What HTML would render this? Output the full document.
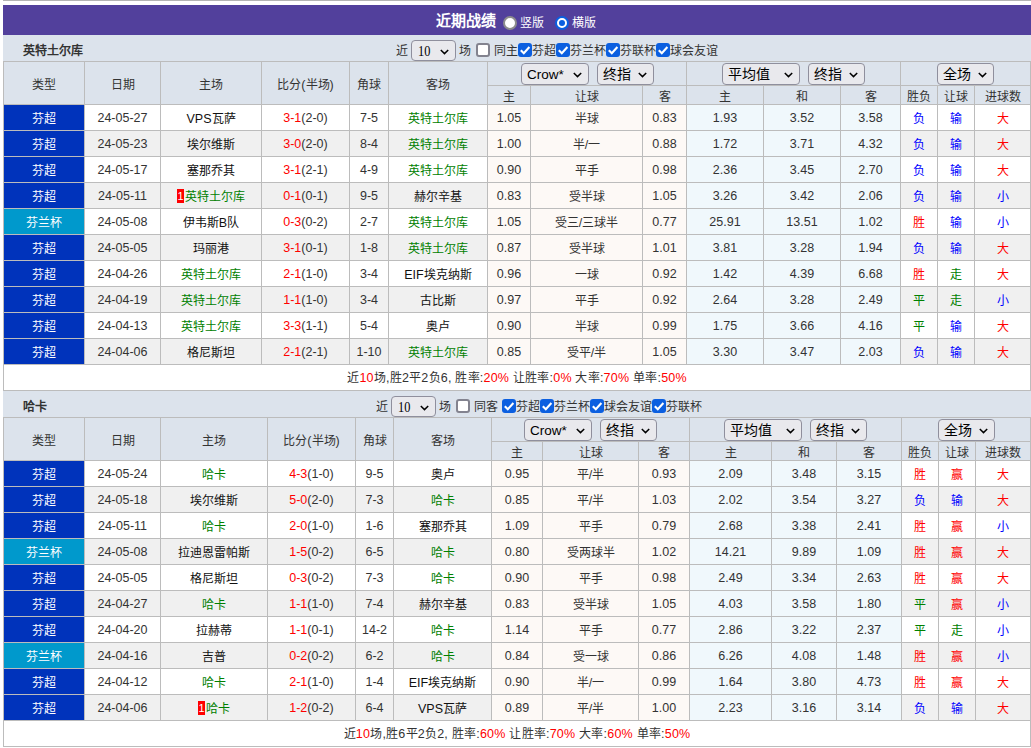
<!DOCTYPE html><html lang="zh-CN"><head><meta charset="utf-8"><style>
*{margin:0;padding:0;box-sizing:border-box}
html,body{width:1031px;height:748px;overflow:hidden;background:#fff}
body{position:relative;font-family:"Liberation Sans",sans-serif;font-size:12.5px;color:#333}
.a{position:absolute}
.ln{position:absolute;background:#bcbcbc}
.c{position:absolute;display:flex;align-items:center;justify-content:center;white-space:nowrap}
.t{position:absolute;white-space:nowrap}
.hd{background:#dce3ec}
.k{font-size:12px}
.fc{background:#0033bb;color:#fff}
.fb{background:#0099cc;color:#fff}
.ah{background:#fdf9f6}
.ox{background:#f0f8fc}
.alt{background:#f0f0f0}
.g{color:#008000}.r{color:#f00}.b{color:#00f}
.tm{color:#111;font-weight:500}
.g{font-weight:500}
.sel{position:absolute;border:1px solid #8f8f9d;border-radius:4px;background:#e9e9ed;color:#000;font-size:13.5px}
.sel .k{font-size:14px}
.sel>span{position:absolute;left:5px;top:0;line-height:21px;white-space:nowrap}
.sel svg{position:absolute;right:6px;top:8px}
.cb{position:absolute;width:14px;height:14px;border-radius:3px}
.cb.on{background:#0b5fe0}
.cb.off{border:2px solid #83838f;background:#fff}
.badge{display:inline-block;background:#f00;color:#fff;font-size:11px;line-height:14px;width:7px;text-align:center;margin-right:1px;position:relative;top:-1px}
</style></head><body><div class="a" style="left:3px;top:0;width:1028px;height:1px;background:#b4b4b4"></div>
<div class="a" style="left:3px;top:5px;width:1028px;height:30px;background:#52409c"></div>
<div class="t" style="left:436px;top:6px;line-height:30px;font-weight:bold;color:#fff"><span style="font-size:15px">近期战绩</span></div>
<div class="a" style="left:503px;top:16px;width:14px;height:14px;border-radius:50%;background:#fff;border:2px solid #8c8c8c"></div>
<div class="t" style="left:520px;top:8px;line-height:30px;color:#fff"><span class="k">竖版</span></div>
<div class="a" style="left:555px;top:16px;width:14px;height:14px;border-radius:50%;background:#fff;border:2px solid #0b5fe0"><div style="position:absolute;left:2px;top:2px;width:6px;height:6px;border-radius:50%;background:#0b5fe0"></div></div>
<div class="t" style="left:572px;top:8px;line-height:30px;color:#fff"><span class="k">横版</span></div>
<div class="a hd" style="left:3px;top:35px;width:1028px;height:26px;"></div>
<div class="t" style="left:23px;top:38px;line-height:26px;font-weight:bold;color:#333"><span class="k">英特土尔库</span></div>
<div class="t" style="left:396px;top:42px;line-height:18px;color:#333"><span class="k">近</span></div>
<div class="sel" style="left:411px;top:40px;width:45px;height:21px;font-family:'Liberation Serif',serif;font-size:14.5px"><span style="left:6px;line-height:20px;transform:scaleX(0.85);transform-origin:0 0">10</span><svg width="9" height="6" viewBox="0 0 9 6"><path d="M0.8 1l3.7 3.6 3.7-3.6" fill="none" stroke="#000" stroke-width="1.5"/></svg></div>
<div class="t" style="left:459px;top:42px;line-height:18px;color:#333"><span class="k">场</span></div>
<div class="cb off" style="left:476px;top:43px"></div>
<div class="t" style="left:494px;top:42px;line-height:18px;color:#333"><span class="k">同主</span></div>
<div class="cb on" style="left:518px;top:43px"><svg width="14" height="14" viewBox="0 0 14 14" style="position:absolute;left:0;top:0"><path d="M2.8 7.2l3 3 5.6-6.2" fill="none" stroke="#fff" stroke-width="2.1"/></svg></div>
<div class="t" style="left:532px;top:42px;line-height:18px;color:#333"><span class="k">芬超</span></div>
<div class="cb on" style="left:556px;top:43px"><svg width="14" height="14" viewBox="0 0 14 14" style="position:absolute;left:0;top:0"><path d="M2.8 7.2l3 3 5.6-6.2" fill="none" stroke="#fff" stroke-width="2.1"/></svg></div>
<div class="t" style="left:570px;top:42px;line-height:18px;color:#333"><span class="k">芬兰杯</span></div>
<div class="cb on" style="left:606px;top:43px"><svg width="14" height="14" viewBox="0 0 14 14" style="position:absolute;left:0;top:0"><path d="M2.8 7.2l3 3 5.6-6.2" fill="none" stroke="#fff" stroke-width="2.1"/></svg></div>
<div class="t" style="left:620px;top:42px;line-height:18px;color:#333"><span class="k">芬联杯</span></div>
<div class="cb on" style="left:656px;top:43px"><svg width="14" height="14" viewBox="0 0 14 14" style="position:absolute;left:0;top:0"><path d="M2.8 7.2l3 3 5.6-6.2" fill="none" stroke="#fff" stroke-width="2.1"/></svg></div>
<div class="t" style="left:670px;top:42px;line-height:18px;color:#333"><span class="k">球会友谊</span></div>
<div class="a hd" style="left:3px;top:61px;width:1028px;height:43px;"></div>
<div class="a fc" style="left:4px;top:105px;width:80px;height:25px;"></div>
<div class="a" style="left:85px;top:105px;width:75px;height:25px;"></div>
<div class="a" style="left:161px;top:105px;width:100px;height:25px;"></div>
<div class="a" style="left:262px;top:105px;width:87px;height:25px;"></div>
<div class="a" style="left:350px;top:105px;width:38px;height:25px;"></div>
<div class="a" style="left:389px;top:105px;width:98px;height:25px;"></div>
<div class="a ah" style="left:488px;top:105px;width:42px;height:25px;"></div>
<div class="a ah" style="left:531px;top:105px;width:111px;height:25px;"></div>
<div class="a ah" style="left:643px;top:105px;width:43px;height:25px;"></div>
<div class="a ox" style="left:687px;top:105px;width:76px;height:25px;"></div>
<div class="a ox" style="left:764px;top:105px;width:76px;height:25px;"></div>
<div class="a ox" style="left:841px;top:105px;width:59px;height:25px;"></div>
<div class="a" style="left:901px;top:105px;width:36px;height:25px;"></div>
<div class="a" style="left:938px;top:105px;width:36px;height:25px;"></div>
<div class="a" style="left:975px;top:105px;width:55px;height:25px;"></div>
<div class="a fc" style="left:4px;top:131px;width:80px;height:25px;"></div>
<div class="a alt" style="left:85px;top:131px;width:75px;height:25px;"></div>
<div class="a alt" style="left:161px;top:131px;width:100px;height:25px;"></div>
<div class="a alt" style="left:262px;top:131px;width:87px;height:25px;"></div>
<div class="a alt" style="left:350px;top:131px;width:38px;height:25px;"></div>
<div class="a alt" style="left:389px;top:131px;width:98px;height:25px;"></div>
<div class="a ah" style="left:488px;top:131px;width:42px;height:25px;"></div>
<div class="a ah" style="left:531px;top:131px;width:111px;height:25px;"></div>
<div class="a ah" style="left:643px;top:131px;width:43px;height:25px;"></div>
<div class="a ox" style="left:687px;top:131px;width:76px;height:25px;"></div>
<div class="a ox" style="left:764px;top:131px;width:76px;height:25px;"></div>
<div class="a ox" style="left:841px;top:131px;width:59px;height:25px;"></div>
<div class="a alt" style="left:901px;top:131px;width:36px;height:25px;"></div>
<div class="a alt" style="left:938px;top:131px;width:36px;height:25px;"></div>
<div class="a alt" style="left:975px;top:131px;width:55px;height:25px;"></div>
<div class="a fc" style="left:4px;top:157px;width:80px;height:25px;"></div>
<div class="a" style="left:85px;top:157px;width:75px;height:25px;"></div>
<div class="a" style="left:161px;top:157px;width:100px;height:25px;"></div>
<div class="a" style="left:262px;top:157px;width:87px;height:25px;"></div>
<div class="a" style="left:350px;top:157px;width:38px;height:25px;"></div>
<div class="a" style="left:389px;top:157px;width:98px;height:25px;"></div>
<div class="a ah" style="left:488px;top:157px;width:42px;height:25px;"></div>
<div class="a ah" style="left:531px;top:157px;width:111px;height:25px;"></div>
<div class="a ah" style="left:643px;top:157px;width:43px;height:25px;"></div>
<div class="a ox" style="left:687px;top:157px;width:76px;height:25px;"></div>
<div class="a ox" style="left:764px;top:157px;width:76px;height:25px;"></div>
<div class="a ox" style="left:841px;top:157px;width:59px;height:25px;"></div>
<div class="a" style="left:901px;top:157px;width:36px;height:25px;"></div>
<div class="a" style="left:938px;top:157px;width:36px;height:25px;"></div>
<div class="a" style="left:975px;top:157px;width:55px;height:25px;"></div>
<div class="a fc" style="left:4px;top:183px;width:80px;height:25px;"></div>
<div class="a alt" style="left:85px;top:183px;width:75px;height:25px;"></div>
<div class="a alt" style="left:161px;top:183px;width:100px;height:25px;"></div>
<div class="a alt" style="left:262px;top:183px;width:87px;height:25px;"></div>
<div class="a alt" style="left:350px;top:183px;width:38px;height:25px;"></div>
<div class="a alt" style="left:389px;top:183px;width:98px;height:25px;"></div>
<div class="a ah" style="left:488px;top:183px;width:42px;height:25px;"></div>
<div class="a ah" style="left:531px;top:183px;width:111px;height:25px;"></div>
<div class="a ah" style="left:643px;top:183px;width:43px;height:25px;"></div>
<div class="a ox" style="left:687px;top:183px;width:76px;height:25px;"></div>
<div class="a ox" style="left:764px;top:183px;width:76px;height:25px;"></div>
<div class="a ox" style="left:841px;top:183px;width:59px;height:25px;"></div>
<div class="a alt" style="left:901px;top:183px;width:36px;height:25px;"></div>
<div class="a alt" style="left:938px;top:183px;width:36px;height:25px;"></div>
<div class="a alt" style="left:975px;top:183px;width:55px;height:25px;"></div>
<div class="a fb" style="left:4px;top:209px;width:80px;height:25px;"></div>
<div class="a" style="left:85px;top:209px;width:75px;height:25px;"></div>
<div class="a" style="left:161px;top:209px;width:100px;height:25px;"></div>
<div class="a" style="left:262px;top:209px;width:87px;height:25px;"></div>
<div class="a" style="left:350px;top:209px;width:38px;height:25px;"></div>
<div class="a" style="left:389px;top:209px;width:98px;height:25px;"></div>
<div class="a ah" style="left:488px;top:209px;width:42px;height:25px;"></div>
<div class="a ah" style="left:531px;top:209px;width:111px;height:25px;"></div>
<div class="a ah" style="left:643px;top:209px;width:43px;height:25px;"></div>
<div class="a ox" style="left:687px;top:209px;width:76px;height:25px;"></div>
<div class="a ox" style="left:764px;top:209px;width:76px;height:25px;"></div>
<div class="a ox" style="left:841px;top:209px;width:59px;height:25px;"></div>
<div class="a" style="left:901px;top:209px;width:36px;height:25px;"></div>
<div class="a" style="left:938px;top:209px;width:36px;height:25px;"></div>
<div class="a" style="left:975px;top:209px;width:55px;height:25px;"></div>
<div class="a fc" style="left:4px;top:235px;width:80px;height:25px;"></div>
<div class="a alt" style="left:85px;top:235px;width:75px;height:25px;"></div>
<div class="a alt" style="left:161px;top:235px;width:100px;height:25px;"></div>
<div class="a alt" style="left:262px;top:235px;width:87px;height:25px;"></div>
<div class="a alt" style="left:350px;top:235px;width:38px;height:25px;"></div>
<div class="a alt" style="left:389px;top:235px;width:98px;height:25px;"></div>
<div class="a ah" style="left:488px;top:235px;width:42px;height:25px;"></div>
<div class="a ah" style="left:531px;top:235px;width:111px;height:25px;"></div>
<div class="a ah" style="left:643px;top:235px;width:43px;height:25px;"></div>
<div class="a ox" style="left:687px;top:235px;width:76px;height:25px;"></div>
<div class="a ox" style="left:764px;top:235px;width:76px;height:25px;"></div>
<div class="a ox" style="left:841px;top:235px;width:59px;height:25px;"></div>
<div class="a alt" style="left:901px;top:235px;width:36px;height:25px;"></div>
<div class="a alt" style="left:938px;top:235px;width:36px;height:25px;"></div>
<div class="a alt" style="left:975px;top:235px;width:55px;height:25px;"></div>
<div class="a fc" style="left:4px;top:261px;width:80px;height:25px;"></div>
<div class="a" style="left:85px;top:261px;width:75px;height:25px;"></div>
<div class="a" style="left:161px;top:261px;width:100px;height:25px;"></div>
<div class="a" style="left:262px;top:261px;width:87px;height:25px;"></div>
<div class="a" style="left:350px;top:261px;width:38px;height:25px;"></div>
<div class="a" style="left:389px;top:261px;width:98px;height:25px;"></div>
<div class="a ah" style="left:488px;top:261px;width:42px;height:25px;"></div>
<div class="a ah" style="left:531px;top:261px;width:111px;height:25px;"></div>
<div class="a ah" style="left:643px;top:261px;width:43px;height:25px;"></div>
<div class="a ox" style="left:687px;top:261px;width:76px;height:25px;"></div>
<div class="a ox" style="left:764px;top:261px;width:76px;height:25px;"></div>
<div class="a ox" style="left:841px;top:261px;width:59px;height:25px;"></div>
<div class="a" style="left:901px;top:261px;width:36px;height:25px;"></div>
<div class="a" style="left:938px;top:261px;width:36px;height:25px;"></div>
<div class="a" style="left:975px;top:261px;width:55px;height:25px;"></div>
<div class="a fc" style="left:4px;top:287px;width:80px;height:25px;"></div>
<div class="a alt" style="left:85px;top:287px;width:75px;height:25px;"></div>
<div class="a alt" style="left:161px;top:287px;width:100px;height:25px;"></div>
<div class="a alt" style="left:262px;top:287px;width:87px;height:25px;"></div>
<div class="a alt" style="left:350px;top:287px;width:38px;height:25px;"></div>
<div class="a alt" style="left:389px;top:287px;width:98px;height:25px;"></div>
<div class="a ah" style="left:488px;top:287px;width:42px;height:25px;"></div>
<div class="a ah" style="left:531px;top:287px;width:111px;height:25px;"></div>
<div class="a ah" style="left:643px;top:287px;width:43px;height:25px;"></div>
<div class="a ox" style="left:687px;top:287px;width:76px;height:25px;"></div>
<div class="a ox" style="left:764px;top:287px;width:76px;height:25px;"></div>
<div class="a ox" style="left:841px;top:287px;width:59px;height:25px;"></div>
<div class="a alt" style="left:901px;top:287px;width:36px;height:25px;"></div>
<div class="a alt" style="left:938px;top:287px;width:36px;height:25px;"></div>
<div class="a alt" style="left:975px;top:287px;width:55px;height:25px;"></div>
<div class="a fc" style="left:4px;top:313px;width:80px;height:25px;"></div>
<div class="a" style="left:85px;top:313px;width:75px;height:25px;"></div>
<div class="a" style="left:161px;top:313px;width:100px;height:25px;"></div>
<div class="a" style="left:262px;top:313px;width:87px;height:25px;"></div>
<div class="a" style="left:350px;top:313px;width:38px;height:25px;"></div>
<div class="a" style="left:389px;top:313px;width:98px;height:25px;"></div>
<div class="a ah" style="left:488px;top:313px;width:42px;height:25px;"></div>
<div class="a ah" style="left:531px;top:313px;width:111px;height:25px;"></div>
<div class="a ah" style="left:643px;top:313px;width:43px;height:25px;"></div>
<div class="a ox" style="left:687px;top:313px;width:76px;height:25px;"></div>
<div class="a ox" style="left:764px;top:313px;width:76px;height:25px;"></div>
<div class="a ox" style="left:841px;top:313px;width:59px;height:25px;"></div>
<div class="a" style="left:901px;top:313px;width:36px;height:25px;"></div>
<div class="a" style="left:938px;top:313px;width:36px;height:25px;"></div>
<div class="a" style="left:975px;top:313px;width:55px;height:25px;"></div>
<div class="a fc" style="left:4px;top:339px;width:80px;height:25px;"></div>
<div class="a alt" style="left:85px;top:339px;width:75px;height:25px;"></div>
<div class="a alt" style="left:161px;top:339px;width:100px;height:25px;"></div>
<div class="a alt" style="left:262px;top:339px;width:87px;height:25px;"></div>
<div class="a alt" style="left:350px;top:339px;width:38px;height:25px;"></div>
<div class="a alt" style="left:389px;top:339px;width:98px;height:25px;"></div>
<div class="a ah" style="left:488px;top:339px;width:42px;height:25px;"></div>
<div class="a ah" style="left:531px;top:339px;width:111px;height:25px;"></div>
<div class="a ah" style="left:643px;top:339px;width:43px;height:25px;"></div>
<div class="a ox" style="left:687px;top:339px;width:76px;height:25px;"></div>
<div class="a ox" style="left:764px;top:339px;width:76px;height:25px;"></div>
<div class="a ox" style="left:841px;top:339px;width:59px;height:25px;"></div>
<div class="a alt" style="left:901px;top:339px;width:36px;height:25px;"></div>
<div class="a alt" style="left:938px;top:339px;width:36px;height:25px;"></div>
<div class="a alt" style="left:975px;top:339px;width:55px;height:25px;"></div>
<div class="ln" style="left:3px;top:61px;width:1028px;height:1px;"></div>
<div class="ln" style="left:487px;top:85px;width:543px;height:1px;"></div>
<div class="ln" style="left:3px;top:104px;width:1028px;height:1px;"></div>
<div class="ln" style="left:3px;top:130px;width:1028px;height:1px;"></div>
<div class="ln" style="left:3px;top:156px;width:1028px;height:1px;"></div>
<div class="ln" style="left:3px;top:182px;width:1028px;height:1px;"></div>
<div class="ln" style="left:3px;top:208px;width:1028px;height:1px;"></div>
<div class="ln" style="left:3px;top:234px;width:1028px;height:1px;"></div>
<div class="ln" style="left:3px;top:260px;width:1028px;height:1px;"></div>
<div class="ln" style="left:3px;top:286px;width:1028px;height:1px;"></div>
<div class="ln" style="left:3px;top:312px;width:1028px;height:1px;"></div>
<div class="ln" style="left:3px;top:338px;width:1028px;height:1px;"></div>
<div class="ln" style="left:3px;top:364px;width:1028px;height:1px;"></div>
<div class="ln" style="left:3px;top:390px;width:1028px;height:1px;"></div>
<div class="ln" style="left:3px;top:61px;width:1px;height:329px;"></div>
<div class="ln" style="left:84px;top:61px;width:1px;height:303px;"></div>
<div class="ln" style="left:160px;top:61px;width:1px;height:303px;"></div>
<div class="ln" style="left:261px;top:61px;width:1px;height:303px;"></div>
<div class="ln" style="left:349px;top:61px;width:1px;height:303px;"></div>
<div class="ln" style="left:388px;top:61px;width:1px;height:303px;"></div>
<div class="ln" style="left:487px;top:61px;width:1px;height:303px;"></div>
<div class="ln" style="left:530px;top:85px;width:1px;height:279px;"></div>
<div class="ln" style="left:642px;top:85px;width:1px;height:279px;"></div>
<div class="ln" style="left:686px;top:61px;width:1px;height:303px;"></div>
<div class="ln" style="left:763px;top:85px;width:1px;height:279px;"></div>
<div class="ln" style="left:840px;top:85px;width:1px;height:279px;"></div>
<div class="ln" style="left:900px;top:61px;width:1px;height:303px;"></div>
<div class="ln" style="left:937px;top:85px;width:1px;height:279px;"></div>
<div class="ln" style="left:974px;top:85px;width:1px;height:279px;"></div>
<div class="ln" style="left:1030px;top:61px;width:1px;height:329px;"></div>
<div class="c" style="left:4px;top:62px;width:80px;height:42px;"><span><span class="k">类型</span></span></div>
<div class="c" style="left:85px;top:62px;width:75px;height:42px;"><span><span class="k">日期</span></span></div>
<div class="c" style="left:161px;top:62px;width:100px;height:42px;"><span><span class="k">主场</span></span></div>
<div class="c" style="left:262px;top:62px;width:87px;height:42px;"><span><span class="k">比分</span>(<span class="k">半场</span>)</span></div>
<div class="c" style="left:350px;top:62px;width:38px;height:42px;"><span><span class="k">角球</span></span></div>
<div class="c" style="left:389px;top:62px;width:98px;height:42px;"><span><span class="k">客场</span></span></div>
<div class="c" style="left:488px;top:86px;width:42px;height:18px;"><span><span class="k">主</span></span></div>
<div class="c" style="left:531px;top:86px;width:111px;height:18px;"><span><span class="k">让球</span></span></div>
<div class="c" style="left:643px;top:86px;width:43px;height:18px;"><span><span class="k">客</span></span></div>
<div class="c" style="left:687px;top:86px;width:76px;height:18px;"><span><span class="k">主</span></span></div>
<div class="c" style="left:764px;top:86px;width:76px;height:18px;"><span><span class="k">和</span></span></div>
<div class="c" style="left:841px;top:86px;width:59px;height:18px;"><span><span class="k">客</span></span></div>
<div class="c" style="left:901px;top:86px;width:36px;height:18px;"><span><span class="k">胜负</span></span></div>
<div class="c" style="left:938px;top:86px;width:36px;height:18px;"><span><span class="k">让球</span></span></div>
<div class="c" style="left:975px;top:86px;width:55px;height:18px;"><span><span class="k">进球数</span></span></div>
<div class="c" style="left:4px;top:105px;width:80px;height:25px;"><span><span style="color:#fff"><span class="k">芬超</span></span></span></div>
<div class="c" style="left:85px;top:105px;width:75px;height:25px;"><span>24-05-27</span></div>
<div class="c" style="left:161px;top:105px;width:100px;height:25px;"><span><span class="tm">VPS<span class="k">瓦萨</span></span></span></div>
<div class="c" style="left:262px;top:105px;width:87px;height:25px;"><span><span class="r">3-1</span>(2-0)</span></div>
<div class="c" style="left:350px;top:105px;width:38px;height:25px;"><span>7-5</span></div>
<div class="c" style="left:389px;top:105px;width:98px;height:25px;"><span><span class="g"><span class="k">英特土尔库</span></span></span></div>
<div class="c" style="left:488px;top:105px;width:42px;height:25px;"><span>1.05</span></div>
<div class="c" style="left:531px;top:105px;width:111px;height:25px;"><span><span class="k">半球</span></span></div>
<div class="c" style="left:643px;top:105px;width:43px;height:25px;"><span>0.83</span></div>
<div class="c" style="left:687px;top:105px;width:76px;height:25px;"><span>1.93</span></div>
<div class="c" style="left:764px;top:105px;width:76px;height:25px;"><span>3.52</span></div>
<div class="c" style="left:841px;top:105px;width:59px;height:25px;"><span>3.58</span></div>
<div class="c" style="left:901px;top:105px;width:36px;height:25px;"><span><span class="b k">负</span></span></div>
<div class="c" style="left:938px;top:105px;width:36px;height:25px;"><span><span class="b k">输</span></span></div>
<div class="c" style="left:975px;top:105px;width:55px;height:25px;"><span><span class="r k">大</span></span></div>
<div class="c" style="left:4px;top:131px;width:80px;height:25px;"><span><span style="color:#fff"><span class="k">芬超</span></span></span></div>
<div class="c" style="left:85px;top:131px;width:75px;height:25px;"><span>24-05-23</span></div>
<div class="c" style="left:161px;top:131px;width:100px;height:25px;"><span><span class="tm"><span class="k">埃尔维斯</span></span></span></div>
<div class="c" style="left:262px;top:131px;width:87px;height:25px;"><span><span class="r">3-0</span>(2-0)</span></div>
<div class="c" style="left:350px;top:131px;width:38px;height:25px;"><span>8-4</span></div>
<div class="c" style="left:389px;top:131px;width:98px;height:25px;"><span><span class="g"><span class="k">英特土尔库</span></span></span></div>
<div class="c" style="left:488px;top:131px;width:42px;height:25px;"><span>1.00</span></div>
<div class="c" style="left:531px;top:131px;width:111px;height:25px;"><span><span class="k">半</span>/<span class="k">一</span></span></div>
<div class="c" style="left:643px;top:131px;width:43px;height:25px;"><span>0.88</span></div>
<div class="c" style="left:687px;top:131px;width:76px;height:25px;"><span>1.72</span></div>
<div class="c" style="left:764px;top:131px;width:76px;height:25px;"><span>3.71</span></div>
<div class="c" style="left:841px;top:131px;width:59px;height:25px;"><span>4.32</span></div>
<div class="c" style="left:901px;top:131px;width:36px;height:25px;"><span><span class="b k">负</span></span></div>
<div class="c" style="left:938px;top:131px;width:36px;height:25px;"><span><span class="b k">输</span></span></div>
<div class="c" style="left:975px;top:131px;width:55px;height:25px;"><span><span class="r k">大</span></span></div>
<div class="c" style="left:4px;top:157px;width:80px;height:25px;"><span><span style="color:#fff"><span class="k">芬超</span></span></span></div>
<div class="c" style="left:85px;top:157px;width:75px;height:25px;"><span>24-05-17</span></div>
<div class="c" style="left:161px;top:157px;width:100px;height:25px;"><span><span class="tm"><span class="k">塞那乔其</span></span></span></div>
<div class="c" style="left:262px;top:157px;width:87px;height:25px;"><span><span class="r">3-1</span>(2-1)</span></div>
<div class="c" style="left:350px;top:157px;width:38px;height:25px;"><span>4-9</span></div>
<div class="c" style="left:389px;top:157px;width:98px;height:25px;"><span><span class="g"><span class="k">英特土尔库</span></span></span></div>
<div class="c" style="left:488px;top:157px;width:42px;height:25px;"><span>0.90</span></div>
<div class="c" style="left:531px;top:157px;width:111px;height:25px;"><span><span class="k">平手</span></span></div>
<div class="c" style="left:643px;top:157px;width:43px;height:25px;"><span>0.98</span></div>
<div class="c" style="left:687px;top:157px;width:76px;height:25px;"><span>2.36</span></div>
<div class="c" style="left:764px;top:157px;width:76px;height:25px;"><span>3.45</span></div>
<div class="c" style="left:841px;top:157px;width:59px;height:25px;"><span>2.70</span></div>
<div class="c" style="left:901px;top:157px;width:36px;height:25px;"><span><span class="b k">负</span></span></div>
<div class="c" style="left:938px;top:157px;width:36px;height:25px;"><span><span class="b k">输</span></span></div>
<div class="c" style="left:975px;top:157px;width:55px;height:25px;"><span><span class="r k">大</span></span></div>
<div class="c" style="left:4px;top:183px;width:80px;height:25px;"><span><span style="color:#fff"><span class="k">芬超</span></span></span></div>
<div class="c" style="left:85px;top:183px;width:75px;height:25px;"><span>24-05-11</span></div>
<div class="c" style="left:161px;top:183px;width:100px;height:25px;"><span><span class="badge">1</span><span class="g"><span class="k">英特土尔库</span></span></span></div>
<div class="c" style="left:262px;top:183px;width:87px;height:25px;"><span><span class="r">0-1</span>(0-1)</span></div>
<div class="c" style="left:350px;top:183px;width:38px;height:25px;"><span>9-5</span></div>
<div class="c" style="left:389px;top:183px;width:98px;height:25px;"><span><span class="tm"><span class="k">赫尔辛基</span></span></span></div>
<div class="c" style="left:488px;top:183px;width:42px;height:25px;"><span>0.83</span></div>
<div class="c" style="left:531px;top:183px;width:111px;height:25px;"><span><span class="k">受半球</span></span></div>
<div class="c" style="left:643px;top:183px;width:43px;height:25px;"><span>1.05</span></div>
<div class="c" style="left:687px;top:183px;width:76px;height:25px;"><span>3.26</span></div>
<div class="c" style="left:764px;top:183px;width:76px;height:25px;"><span>3.42</span></div>
<div class="c" style="left:841px;top:183px;width:59px;height:25px;"><span>2.06</span></div>
<div class="c" style="left:901px;top:183px;width:36px;height:25px;"><span><span class="b k">负</span></span></div>
<div class="c" style="left:938px;top:183px;width:36px;height:25px;"><span><span class="b k">输</span></span></div>
<div class="c" style="left:975px;top:183px;width:55px;height:25px;"><span><span class="b k">小</span></span></div>
<div class="c" style="left:4px;top:209px;width:80px;height:25px;"><span><span style="color:#fff"><span class="k">芬兰杯</span></span></span></div>
<div class="c" style="left:85px;top:209px;width:75px;height:25px;"><span>24-05-08</span></div>
<div class="c" style="left:161px;top:209px;width:100px;height:25px;"><span><span class="tm"><span class="k">伊韦斯</span>B<span class="k">队</span></span></span></div>
<div class="c" style="left:262px;top:209px;width:87px;height:25px;"><span><span class="r">0-3</span>(0-2)</span></div>
<div class="c" style="left:350px;top:209px;width:38px;height:25px;"><span>2-7</span></div>
<div class="c" style="left:389px;top:209px;width:98px;height:25px;"><span><span class="g"><span class="k">英特土尔库</span></span></span></div>
<div class="c" style="left:488px;top:209px;width:42px;height:25px;"><span>1.05</span></div>
<div class="c" style="left:531px;top:209px;width:111px;height:25px;"><span><span class="k">受三</span>/<span class="k">三球半</span></span></div>
<div class="c" style="left:643px;top:209px;width:43px;height:25px;"><span>0.77</span></div>
<div class="c" style="left:687px;top:209px;width:76px;height:25px;"><span>25.91</span></div>
<div class="c" style="left:764px;top:209px;width:76px;height:25px;"><span>13.51</span></div>
<div class="c" style="left:841px;top:209px;width:59px;height:25px;"><span>1.02</span></div>
<div class="c" style="left:901px;top:209px;width:36px;height:25px;"><span><span class="r k">胜</span></span></div>
<div class="c" style="left:938px;top:209px;width:36px;height:25px;"><span><span class="b k">输</span></span></div>
<div class="c" style="left:975px;top:209px;width:55px;height:25px;"><span><span class="b k">小</span></span></div>
<div class="c" style="left:4px;top:235px;width:80px;height:25px;"><span><span style="color:#fff"><span class="k">芬超</span></span></span></div>
<div class="c" style="left:85px;top:235px;width:75px;height:25px;"><span>24-05-05</span></div>
<div class="c" style="left:161px;top:235px;width:100px;height:25px;"><span><span class="tm"><span class="k">玛丽港</span></span></span></div>
<div class="c" style="left:262px;top:235px;width:87px;height:25px;"><span><span class="r">3-1</span>(0-1)</span></div>
<div class="c" style="left:350px;top:235px;width:38px;height:25px;"><span>1-8</span></div>
<div class="c" style="left:389px;top:235px;width:98px;height:25px;"><span><span class="g"><span class="k">英特土尔库</span></span></span></div>
<div class="c" style="left:488px;top:235px;width:42px;height:25px;"><span>0.87</span></div>
<div class="c" style="left:531px;top:235px;width:111px;height:25px;"><span><span class="k">受半球</span></span></div>
<div class="c" style="left:643px;top:235px;width:43px;height:25px;"><span>1.01</span></div>
<div class="c" style="left:687px;top:235px;width:76px;height:25px;"><span>3.81</span></div>
<div class="c" style="left:764px;top:235px;width:76px;height:25px;"><span>3.28</span></div>
<div class="c" style="left:841px;top:235px;width:59px;height:25px;"><span>1.94</span></div>
<div class="c" style="left:901px;top:235px;width:36px;height:25px;"><span><span class="b k">负</span></span></div>
<div class="c" style="left:938px;top:235px;width:36px;height:25px;"><span><span class="b k">输</span></span></div>
<div class="c" style="left:975px;top:235px;width:55px;height:25px;"><span><span class="r k">大</span></span></div>
<div class="c" style="left:4px;top:261px;width:80px;height:25px;"><span><span style="color:#fff"><span class="k">芬超</span></span></span></div>
<div class="c" style="left:85px;top:261px;width:75px;height:25px;"><span>24-04-26</span></div>
<div class="c" style="left:161px;top:261px;width:100px;height:25px;"><span><span class="g"><span class="k">英特土尔库</span></span></span></div>
<div class="c" style="left:262px;top:261px;width:87px;height:25px;"><span><span class="r">2-1</span>(1-0)</span></div>
<div class="c" style="left:350px;top:261px;width:38px;height:25px;"><span>3-4</span></div>
<div class="c" style="left:389px;top:261px;width:98px;height:25px;"><span><span class="tm">EIF<span class="k">埃克纳斯</span></span></span></div>
<div class="c" style="left:488px;top:261px;width:42px;height:25px;"><span>0.96</span></div>
<div class="c" style="left:531px;top:261px;width:111px;height:25px;"><span><span class="k">一球</span></span></div>
<div class="c" style="left:643px;top:261px;width:43px;height:25px;"><span>0.92</span></div>
<div class="c" style="left:687px;top:261px;width:76px;height:25px;"><span>1.42</span></div>
<div class="c" style="left:764px;top:261px;width:76px;height:25px;"><span>4.39</span></div>
<div class="c" style="left:841px;top:261px;width:59px;height:25px;"><span>6.68</span></div>
<div class="c" style="left:901px;top:261px;width:36px;height:25px;"><span><span class="r k">胜</span></span></div>
<div class="c" style="left:938px;top:261px;width:36px;height:25px;"><span><span class="g k">走</span></span></div>
<div class="c" style="left:975px;top:261px;width:55px;height:25px;"><span><span class="r k">大</span></span></div>
<div class="c" style="left:4px;top:287px;width:80px;height:25px;"><span><span style="color:#fff"><span class="k">芬超</span></span></span></div>
<div class="c" style="left:85px;top:287px;width:75px;height:25px;"><span>24-04-19</span></div>
<div class="c" style="left:161px;top:287px;width:100px;height:25px;"><span><span class="g"><span class="k">英特土尔库</span></span></span></div>
<div class="c" style="left:262px;top:287px;width:87px;height:25px;"><span><span class="r">1-1</span>(1-0)</span></div>
<div class="c" style="left:350px;top:287px;width:38px;height:25px;"><span>3-4</span></div>
<div class="c" style="left:389px;top:287px;width:98px;height:25px;"><span><span class="tm"><span class="k">古比斯</span></span></span></div>
<div class="c" style="left:488px;top:287px;width:42px;height:25px;"><span>0.97</span></div>
<div class="c" style="left:531px;top:287px;width:111px;height:25px;"><span><span class="k">平手</span></span></div>
<div class="c" style="left:643px;top:287px;width:43px;height:25px;"><span>0.92</span></div>
<div class="c" style="left:687px;top:287px;width:76px;height:25px;"><span>2.64</span></div>
<div class="c" style="left:764px;top:287px;width:76px;height:25px;"><span>3.28</span></div>
<div class="c" style="left:841px;top:287px;width:59px;height:25px;"><span>2.49</span></div>
<div class="c" style="left:901px;top:287px;width:36px;height:25px;"><span><span class="g k">平</span></span></div>
<div class="c" style="left:938px;top:287px;width:36px;height:25px;"><span><span class="g k">走</span></span></div>
<div class="c" style="left:975px;top:287px;width:55px;height:25px;"><span><span class="b k">小</span></span></div>
<div class="c" style="left:4px;top:313px;width:80px;height:25px;"><span><span style="color:#fff"><span class="k">芬超</span></span></span></div>
<div class="c" style="left:85px;top:313px;width:75px;height:25px;"><span>24-04-13</span></div>
<div class="c" style="left:161px;top:313px;width:100px;height:25px;"><span><span class="g"><span class="k">英特土尔库</span></span></span></div>
<div class="c" style="left:262px;top:313px;width:87px;height:25px;"><span><span class="r">3-3</span>(1-1)</span></div>
<div class="c" style="left:350px;top:313px;width:38px;height:25px;"><span>5-4</span></div>
<div class="c" style="left:389px;top:313px;width:98px;height:25px;"><span><span class="tm"><span class="k">奥卢</span></span></span></div>
<div class="c" style="left:488px;top:313px;width:42px;height:25px;"><span>0.90</span></div>
<div class="c" style="left:531px;top:313px;width:111px;height:25px;"><span><span class="k">半球</span></span></div>
<div class="c" style="left:643px;top:313px;width:43px;height:25px;"><span>0.99</span></div>
<div class="c" style="left:687px;top:313px;width:76px;height:25px;"><span>1.75</span></div>
<div class="c" style="left:764px;top:313px;width:76px;height:25px;"><span>3.66</span></div>
<div class="c" style="left:841px;top:313px;width:59px;height:25px;"><span>4.16</span></div>
<div class="c" style="left:901px;top:313px;width:36px;height:25px;"><span><span class="g k">平</span></span></div>
<div class="c" style="left:938px;top:313px;width:36px;height:25px;"><span><span class="b k">输</span></span></div>
<div class="c" style="left:975px;top:313px;width:55px;height:25px;"><span><span class="r k">大</span></span></div>
<div class="c" style="left:4px;top:339px;width:80px;height:25px;"><span><span style="color:#fff"><span class="k">芬超</span></span></span></div>
<div class="c" style="left:85px;top:339px;width:75px;height:25px;"><span>24-04-06</span></div>
<div class="c" style="left:161px;top:339px;width:100px;height:25px;"><span><span class="tm"><span class="k">格尼斯坦</span></span></span></div>
<div class="c" style="left:262px;top:339px;width:87px;height:25px;"><span><span class="r">2-1</span>(2-1)</span></div>
<div class="c" style="left:350px;top:339px;width:38px;height:25px;"><span>1-10</span></div>
<div class="c" style="left:389px;top:339px;width:98px;height:25px;"><span><span class="g"><span class="k">英特土尔库</span></span></span></div>
<div class="c" style="left:488px;top:339px;width:42px;height:25px;"><span>0.85</span></div>
<div class="c" style="left:531px;top:339px;width:111px;height:25px;"><span><span class="k">受平</span>/<span class="k">半</span></span></div>
<div class="c" style="left:643px;top:339px;width:43px;height:25px;"><span>1.05</span></div>
<div class="c" style="left:687px;top:339px;width:76px;height:25px;"><span>3.30</span></div>
<div class="c" style="left:764px;top:339px;width:76px;height:25px;"><span>3.47</span></div>
<div class="c" style="left:841px;top:339px;width:59px;height:25px;"><span>2.03</span></div>
<div class="c" style="left:901px;top:339px;width:36px;height:25px;"><span><span class="b k">负</span></span></div>
<div class="c" style="left:938px;top:339px;width:36px;height:25px;"><span><span class="b k">输</span></span></div>
<div class="c" style="left:975px;top:339px;width:55px;height:25px;"><span><span class="r k">大</span></span></div>
<div class="c" style="left:4px;top:364px;width:1026px;height:25px;letter-spacing:0.22px"><span><span class="k">近</span><span class="r">10</span><span class="k">场</span>,<span class="k">胜</span>2<span class="k">平</span>2<span class="k">负</span>6, <span class="k">胜率</span>:<span class="r">20%</span>&nbsp;<span class="k">让胜率</span>:<span class="r">0%</span>&nbsp;<span class="k">大率</span>:<span class="r">70%</span>&nbsp;<span class="k">单率</span>:<span class="r">50%</span></span></div>
<div class="sel" style="left:521px;top:63px;width:68px;height:22px"><span>Crow*</span><svg width="9" height="6" viewBox="0 0 9 6"><path d="M0.8 1l3.7 3.6 3.7-3.6" fill="none" stroke="#000" stroke-width="1.5"/></svg></div>
<div class="sel" style="left:597px;top:63px;width:57px;height:22px"><span><span class="k">终指</span></span><svg width="9" height="6" viewBox="0 0 9 6"><path d="M0.8 1l3.7 3.6 3.7-3.6" fill="none" stroke="#000" stroke-width="1.5"/></svg></div>
<div class="sel" style="left:722px;top:63px;width:78px;height:22px"><span><span class="k">平均值</span></span><svg width="9" height="6" viewBox="0 0 9 6"><path d="M0.8 1l3.7 3.6 3.7-3.6" fill="none" stroke="#000" stroke-width="1.5"/></svg></div>
<div class="sel" style="left:808px;top:63px;width:57px;height:22px"><span><span class="k">终指</span></span><svg width="9" height="6" viewBox="0 0 9 6"><path d="M0.8 1l3.7 3.6 3.7-3.6" fill="none" stroke="#000" stroke-width="1.5"/></svg></div>
<div class="sel" style="left:937px;top:63px;width:57px;height:22px"><span><span class="k">全场</span></span><svg width="9" height="6" viewBox="0 0 9 6"><path d="M0.8 1l3.7 3.6 3.7-3.6" fill="none" stroke="#000" stroke-width="1.5"/></svg></div>
<div class="ln" style="left:3px;top:390px;width:1028px;height:1px;"></div>
<div class="a hd" style="left:3px;top:391px;width:1028px;height:26px;"></div>
<div class="t" style="left:23px;top:394px;line-height:26px;font-weight:bold;color:#333"><span class="k">哈卡</span></div>
<div class="t" style="left:376px;top:398px;line-height:18px;color:#333"><span class="k">近</span></div>
<div class="sel" style="left:391px;top:396px;width:45px;height:21px;font-family:'Liberation Serif',serif;font-size:14.5px"><span style="left:6px;line-height:20px;transform:scaleX(0.85);transform-origin:0 0">10</span><svg width="9" height="6" viewBox="0 0 9 6"><path d="M0.8 1l3.7 3.6 3.7-3.6" fill="none" stroke="#000" stroke-width="1.5"/></svg></div>
<div class="t" style="left:439px;top:398px;line-height:18px;color:#333"><span class="k">场</span></div>
<div class="cb off" style="left:456px;top:399px"></div>
<div class="t" style="left:474px;top:398px;line-height:18px;color:#333"><span class="k">同客</span></div>
<div class="cb on" style="left:502px;top:399px"><svg width="14" height="14" viewBox="0 0 14 14" style="position:absolute;left:0;top:0"><path d="M2.8 7.2l3 3 5.6-6.2" fill="none" stroke="#fff" stroke-width="2.1"/></svg></div>
<div class="t" style="left:516px;top:398px;line-height:18px;color:#333"><span class="k">芬超</span></div>
<div class="cb on" style="left:540px;top:399px"><svg width="14" height="14" viewBox="0 0 14 14" style="position:absolute;left:0;top:0"><path d="M2.8 7.2l3 3 5.6-6.2" fill="none" stroke="#fff" stroke-width="2.1"/></svg></div>
<div class="t" style="left:554px;top:398px;line-height:18px;color:#333"><span class="k">芬兰杯</span></div>
<div class="cb on" style="left:590px;top:399px"><svg width="14" height="14" viewBox="0 0 14 14" style="position:absolute;left:0;top:0"><path d="M2.8 7.2l3 3 5.6-6.2" fill="none" stroke="#fff" stroke-width="2.1"/></svg></div>
<div class="t" style="left:604px;top:398px;line-height:18px;color:#333"><span class="k">球会友谊</span></div>
<div class="cb on" style="left:652px;top:399px"><svg width="14" height="14" viewBox="0 0 14 14" style="position:absolute;left:0;top:0"><path d="M2.8 7.2l3 3 5.6-6.2" fill="none" stroke="#fff" stroke-width="2.1"/></svg></div>
<div class="t" style="left:666px;top:398px;line-height:18px;color:#333"><span class="k">芬联杯</span></div>
<div class="a hd" style="left:3px;top:417px;width:1028px;height:43px;"></div>
<div class="a fc" style="left:4px;top:461px;width:80px;height:25px;"></div>
<div class="a" style="left:85px;top:461px;width:75px;height:25px;"></div>
<div class="a" style="left:161px;top:461px;width:106px;height:25px;"></div>
<div class="a" style="left:268px;top:461px;width:87px;height:25px;"></div>
<div class="a" style="left:356px;top:461px;width:37px;height:25px;"></div>
<div class="a" style="left:394px;top:461px;width:97px;height:25px;"></div>
<div class="a ah" style="left:492px;top:461px;width:50px;height:25px;"></div>
<div class="a ah" style="left:543px;top:461px;width:95px;height:25px;"></div>
<div class="a ah" style="left:639px;top:461px;width:50px;height:25px;"></div>
<div class="a ox" style="left:690px;top:461px;width:81px;height:25px;"></div>
<div class="a ox" style="left:772px;top:461px;width:64px;height:25px;"></div>
<div class="a ox" style="left:837px;top:461px;width:64px;height:25px;"></div>
<div class="a" style="left:902px;top:461px;width:36px;height:25px;"></div>
<div class="a" style="left:939px;top:461px;width:36px;height:25px;"></div>
<div class="a" style="left:976px;top:461px;width:54px;height:25px;"></div>
<div class="a fc" style="left:4px;top:487px;width:80px;height:25px;"></div>
<div class="a alt" style="left:85px;top:487px;width:75px;height:25px;"></div>
<div class="a alt" style="left:161px;top:487px;width:106px;height:25px;"></div>
<div class="a alt" style="left:268px;top:487px;width:87px;height:25px;"></div>
<div class="a alt" style="left:356px;top:487px;width:37px;height:25px;"></div>
<div class="a alt" style="left:394px;top:487px;width:97px;height:25px;"></div>
<div class="a ah" style="left:492px;top:487px;width:50px;height:25px;"></div>
<div class="a ah" style="left:543px;top:487px;width:95px;height:25px;"></div>
<div class="a ah" style="left:639px;top:487px;width:50px;height:25px;"></div>
<div class="a ox" style="left:690px;top:487px;width:81px;height:25px;"></div>
<div class="a ox" style="left:772px;top:487px;width:64px;height:25px;"></div>
<div class="a ox" style="left:837px;top:487px;width:64px;height:25px;"></div>
<div class="a alt" style="left:902px;top:487px;width:36px;height:25px;"></div>
<div class="a alt" style="left:939px;top:487px;width:36px;height:25px;"></div>
<div class="a alt" style="left:976px;top:487px;width:54px;height:25px;"></div>
<div class="a fc" style="left:4px;top:513px;width:80px;height:25px;"></div>
<div class="a" style="left:85px;top:513px;width:75px;height:25px;"></div>
<div class="a" style="left:161px;top:513px;width:106px;height:25px;"></div>
<div class="a" style="left:268px;top:513px;width:87px;height:25px;"></div>
<div class="a" style="left:356px;top:513px;width:37px;height:25px;"></div>
<div class="a" style="left:394px;top:513px;width:97px;height:25px;"></div>
<div class="a ah" style="left:492px;top:513px;width:50px;height:25px;"></div>
<div class="a ah" style="left:543px;top:513px;width:95px;height:25px;"></div>
<div class="a ah" style="left:639px;top:513px;width:50px;height:25px;"></div>
<div class="a ox" style="left:690px;top:513px;width:81px;height:25px;"></div>
<div class="a ox" style="left:772px;top:513px;width:64px;height:25px;"></div>
<div class="a ox" style="left:837px;top:513px;width:64px;height:25px;"></div>
<div class="a" style="left:902px;top:513px;width:36px;height:25px;"></div>
<div class="a" style="left:939px;top:513px;width:36px;height:25px;"></div>
<div class="a" style="left:976px;top:513px;width:54px;height:25px;"></div>
<div class="a fb" style="left:4px;top:539px;width:80px;height:25px;"></div>
<div class="a alt" style="left:85px;top:539px;width:75px;height:25px;"></div>
<div class="a alt" style="left:161px;top:539px;width:106px;height:25px;"></div>
<div class="a alt" style="left:268px;top:539px;width:87px;height:25px;"></div>
<div class="a alt" style="left:356px;top:539px;width:37px;height:25px;"></div>
<div class="a alt" style="left:394px;top:539px;width:97px;height:25px;"></div>
<div class="a ah" style="left:492px;top:539px;width:50px;height:25px;"></div>
<div class="a ah" style="left:543px;top:539px;width:95px;height:25px;"></div>
<div class="a ah" style="left:639px;top:539px;width:50px;height:25px;"></div>
<div class="a ox" style="left:690px;top:539px;width:81px;height:25px;"></div>
<div class="a ox" style="left:772px;top:539px;width:64px;height:25px;"></div>
<div class="a ox" style="left:837px;top:539px;width:64px;height:25px;"></div>
<div class="a alt" style="left:902px;top:539px;width:36px;height:25px;"></div>
<div class="a alt" style="left:939px;top:539px;width:36px;height:25px;"></div>
<div class="a alt" style="left:976px;top:539px;width:54px;height:25px;"></div>
<div class="a fc" style="left:4px;top:565px;width:80px;height:25px;"></div>
<div class="a" style="left:85px;top:565px;width:75px;height:25px;"></div>
<div class="a" style="left:161px;top:565px;width:106px;height:25px;"></div>
<div class="a" style="left:268px;top:565px;width:87px;height:25px;"></div>
<div class="a" style="left:356px;top:565px;width:37px;height:25px;"></div>
<div class="a" style="left:394px;top:565px;width:97px;height:25px;"></div>
<div class="a ah" style="left:492px;top:565px;width:50px;height:25px;"></div>
<div class="a ah" style="left:543px;top:565px;width:95px;height:25px;"></div>
<div class="a ah" style="left:639px;top:565px;width:50px;height:25px;"></div>
<div class="a ox" style="left:690px;top:565px;width:81px;height:25px;"></div>
<div class="a ox" style="left:772px;top:565px;width:64px;height:25px;"></div>
<div class="a ox" style="left:837px;top:565px;width:64px;height:25px;"></div>
<div class="a" style="left:902px;top:565px;width:36px;height:25px;"></div>
<div class="a" style="left:939px;top:565px;width:36px;height:25px;"></div>
<div class="a" style="left:976px;top:565px;width:54px;height:25px;"></div>
<div class="a fc" style="left:4px;top:591px;width:80px;height:25px;"></div>
<div class="a alt" style="left:85px;top:591px;width:75px;height:25px;"></div>
<div class="a alt" style="left:161px;top:591px;width:106px;height:25px;"></div>
<div class="a alt" style="left:268px;top:591px;width:87px;height:25px;"></div>
<div class="a alt" style="left:356px;top:591px;width:37px;height:25px;"></div>
<div class="a alt" style="left:394px;top:591px;width:97px;height:25px;"></div>
<div class="a ah" style="left:492px;top:591px;width:50px;height:25px;"></div>
<div class="a ah" style="left:543px;top:591px;width:95px;height:25px;"></div>
<div class="a ah" style="left:639px;top:591px;width:50px;height:25px;"></div>
<div class="a ox" style="left:690px;top:591px;width:81px;height:25px;"></div>
<div class="a ox" style="left:772px;top:591px;width:64px;height:25px;"></div>
<div class="a ox" style="left:837px;top:591px;width:64px;height:25px;"></div>
<div class="a alt" style="left:902px;top:591px;width:36px;height:25px;"></div>
<div class="a alt" style="left:939px;top:591px;width:36px;height:25px;"></div>
<div class="a alt" style="left:976px;top:591px;width:54px;height:25px;"></div>
<div class="a fc" style="left:4px;top:617px;width:80px;height:25px;"></div>
<div class="a" style="left:85px;top:617px;width:75px;height:25px;"></div>
<div class="a" style="left:161px;top:617px;width:106px;height:25px;"></div>
<div class="a" style="left:268px;top:617px;width:87px;height:25px;"></div>
<div class="a" style="left:356px;top:617px;width:37px;height:25px;"></div>
<div class="a" style="left:394px;top:617px;width:97px;height:25px;"></div>
<div class="a ah" style="left:492px;top:617px;width:50px;height:25px;"></div>
<div class="a ah" style="left:543px;top:617px;width:95px;height:25px;"></div>
<div class="a ah" style="left:639px;top:617px;width:50px;height:25px;"></div>
<div class="a ox" style="left:690px;top:617px;width:81px;height:25px;"></div>
<div class="a ox" style="left:772px;top:617px;width:64px;height:25px;"></div>
<div class="a ox" style="left:837px;top:617px;width:64px;height:25px;"></div>
<div class="a" style="left:902px;top:617px;width:36px;height:25px;"></div>
<div class="a" style="left:939px;top:617px;width:36px;height:25px;"></div>
<div class="a" style="left:976px;top:617px;width:54px;height:25px;"></div>
<div class="a fb" style="left:4px;top:643px;width:80px;height:25px;"></div>
<div class="a alt" style="left:85px;top:643px;width:75px;height:25px;"></div>
<div class="a alt" style="left:161px;top:643px;width:106px;height:25px;"></div>
<div class="a alt" style="left:268px;top:643px;width:87px;height:25px;"></div>
<div class="a alt" style="left:356px;top:643px;width:37px;height:25px;"></div>
<div class="a alt" style="left:394px;top:643px;width:97px;height:25px;"></div>
<div class="a ah" style="left:492px;top:643px;width:50px;height:25px;"></div>
<div class="a ah" style="left:543px;top:643px;width:95px;height:25px;"></div>
<div class="a ah" style="left:639px;top:643px;width:50px;height:25px;"></div>
<div class="a ox" style="left:690px;top:643px;width:81px;height:25px;"></div>
<div class="a ox" style="left:772px;top:643px;width:64px;height:25px;"></div>
<div class="a ox" style="left:837px;top:643px;width:64px;height:25px;"></div>
<div class="a alt" style="left:902px;top:643px;width:36px;height:25px;"></div>
<div class="a alt" style="left:939px;top:643px;width:36px;height:25px;"></div>
<div class="a alt" style="left:976px;top:643px;width:54px;height:25px;"></div>
<div class="a fc" style="left:4px;top:669px;width:80px;height:25px;"></div>
<div class="a" style="left:85px;top:669px;width:75px;height:25px;"></div>
<div class="a" style="left:161px;top:669px;width:106px;height:25px;"></div>
<div class="a" style="left:268px;top:669px;width:87px;height:25px;"></div>
<div class="a" style="left:356px;top:669px;width:37px;height:25px;"></div>
<div class="a" style="left:394px;top:669px;width:97px;height:25px;"></div>
<div class="a ah" style="left:492px;top:669px;width:50px;height:25px;"></div>
<div class="a ah" style="left:543px;top:669px;width:95px;height:25px;"></div>
<div class="a ah" style="left:639px;top:669px;width:50px;height:25px;"></div>
<div class="a ox" style="left:690px;top:669px;width:81px;height:25px;"></div>
<div class="a ox" style="left:772px;top:669px;width:64px;height:25px;"></div>
<div class="a ox" style="left:837px;top:669px;width:64px;height:25px;"></div>
<div class="a" style="left:902px;top:669px;width:36px;height:25px;"></div>
<div class="a" style="left:939px;top:669px;width:36px;height:25px;"></div>
<div class="a" style="left:976px;top:669px;width:54px;height:25px;"></div>
<div class="a fc" style="left:4px;top:695px;width:80px;height:25px;"></div>
<div class="a alt" style="left:85px;top:695px;width:75px;height:25px;"></div>
<div class="a alt" style="left:161px;top:695px;width:106px;height:25px;"></div>
<div class="a alt" style="left:268px;top:695px;width:87px;height:25px;"></div>
<div class="a alt" style="left:356px;top:695px;width:37px;height:25px;"></div>
<div class="a alt" style="left:394px;top:695px;width:97px;height:25px;"></div>
<div class="a ah" style="left:492px;top:695px;width:50px;height:25px;"></div>
<div class="a ah" style="left:543px;top:695px;width:95px;height:25px;"></div>
<div class="a ah" style="left:639px;top:695px;width:50px;height:25px;"></div>
<div class="a ox" style="left:690px;top:695px;width:81px;height:25px;"></div>
<div class="a ox" style="left:772px;top:695px;width:64px;height:25px;"></div>
<div class="a ox" style="left:837px;top:695px;width:64px;height:25px;"></div>
<div class="a alt" style="left:902px;top:695px;width:36px;height:25px;"></div>
<div class="a alt" style="left:939px;top:695px;width:36px;height:25px;"></div>
<div class="a alt" style="left:976px;top:695px;width:54px;height:25px;"></div>
<div class="ln" style="left:3px;top:417px;width:1028px;height:1px;"></div>
<div class="ln" style="left:491px;top:441px;width:539px;height:1px;"></div>
<div class="ln" style="left:3px;top:460px;width:1028px;height:1px;"></div>
<div class="ln" style="left:3px;top:486px;width:1028px;height:1px;"></div>
<div class="ln" style="left:3px;top:512px;width:1028px;height:1px;"></div>
<div class="ln" style="left:3px;top:538px;width:1028px;height:1px;"></div>
<div class="ln" style="left:3px;top:564px;width:1028px;height:1px;"></div>
<div class="ln" style="left:3px;top:590px;width:1028px;height:1px;"></div>
<div class="ln" style="left:3px;top:616px;width:1028px;height:1px;"></div>
<div class="ln" style="left:3px;top:642px;width:1028px;height:1px;"></div>
<div class="ln" style="left:3px;top:668px;width:1028px;height:1px;"></div>
<div class="ln" style="left:3px;top:694px;width:1028px;height:1px;"></div>
<div class="ln" style="left:3px;top:720px;width:1028px;height:1px;"></div>
<div class="ln" style="left:3px;top:746px;width:1028px;height:1px;"></div>
<div class="ln" style="left:3px;top:417px;width:1px;height:329px;"></div>
<div class="ln" style="left:84px;top:417px;width:1px;height:303px;"></div>
<div class="ln" style="left:160px;top:417px;width:1px;height:303px;"></div>
<div class="ln" style="left:267px;top:417px;width:1px;height:303px;"></div>
<div class="ln" style="left:355px;top:417px;width:1px;height:303px;"></div>
<div class="ln" style="left:393px;top:417px;width:1px;height:303px;"></div>
<div class="ln" style="left:491px;top:417px;width:1px;height:303px;"></div>
<div class="ln" style="left:542px;top:441px;width:1px;height:279px;"></div>
<div class="ln" style="left:638px;top:441px;width:1px;height:279px;"></div>
<div class="ln" style="left:689px;top:417px;width:1px;height:303px;"></div>
<div class="ln" style="left:771px;top:441px;width:1px;height:279px;"></div>
<div class="ln" style="left:836px;top:441px;width:1px;height:279px;"></div>
<div class="ln" style="left:901px;top:417px;width:1px;height:303px;"></div>
<div class="ln" style="left:938px;top:441px;width:1px;height:279px;"></div>
<div class="ln" style="left:975px;top:441px;width:1px;height:279px;"></div>
<div class="ln" style="left:1030px;top:417px;width:1px;height:329px;"></div>
<div class="c" style="left:4px;top:418px;width:80px;height:42px;"><span><span class="k">类型</span></span></div>
<div class="c" style="left:85px;top:418px;width:75px;height:42px;"><span><span class="k">日期</span></span></div>
<div class="c" style="left:161px;top:418px;width:106px;height:42px;"><span><span class="k">主场</span></span></div>
<div class="c" style="left:268px;top:418px;width:87px;height:42px;"><span><span class="k">比分</span>(<span class="k">半场</span>)</span></div>
<div class="c" style="left:356px;top:418px;width:37px;height:42px;"><span><span class="k">角球</span></span></div>
<div class="c" style="left:394px;top:418px;width:97px;height:42px;"><span><span class="k">客场</span></span></div>
<div class="c" style="left:492px;top:442px;width:50px;height:18px;"><span><span class="k">主</span></span></div>
<div class="c" style="left:543px;top:442px;width:95px;height:18px;"><span><span class="k">让球</span></span></div>
<div class="c" style="left:639px;top:442px;width:50px;height:18px;"><span><span class="k">客</span></span></div>
<div class="c" style="left:690px;top:442px;width:81px;height:18px;"><span><span class="k">主</span></span></div>
<div class="c" style="left:772px;top:442px;width:64px;height:18px;"><span><span class="k">和</span></span></div>
<div class="c" style="left:837px;top:442px;width:64px;height:18px;"><span><span class="k">客</span></span></div>
<div class="c" style="left:902px;top:442px;width:36px;height:18px;"><span><span class="k">胜负</span></span></div>
<div class="c" style="left:939px;top:442px;width:36px;height:18px;"><span><span class="k">让球</span></span></div>
<div class="c" style="left:976px;top:442px;width:54px;height:18px;"><span><span class="k">进球数</span></span></div>
<div class="c" style="left:4px;top:461px;width:80px;height:25px;"><span><span style="color:#fff"><span class="k">芬超</span></span></span></div>
<div class="c" style="left:85px;top:461px;width:75px;height:25px;"><span>24-05-24</span></div>
<div class="c" style="left:161px;top:461px;width:106px;height:25px;"><span><span class="g"><span class="k">哈卡</span></span></span></div>
<div class="c" style="left:268px;top:461px;width:87px;height:25px;"><span><span class="r">4-3</span>(1-0)</span></div>
<div class="c" style="left:356px;top:461px;width:37px;height:25px;"><span>9-5</span></div>
<div class="c" style="left:394px;top:461px;width:97px;height:25px;"><span><span class="tm"><span class="k">奥卢</span></span></span></div>
<div class="c" style="left:492px;top:461px;width:50px;height:25px;"><span>0.95</span></div>
<div class="c" style="left:543px;top:461px;width:95px;height:25px;"><span><span class="k">平</span>/<span class="k">半</span></span></div>
<div class="c" style="left:639px;top:461px;width:50px;height:25px;"><span>0.93</span></div>
<div class="c" style="left:690px;top:461px;width:81px;height:25px;"><span>2.09</span></div>
<div class="c" style="left:772px;top:461px;width:64px;height:25px;"><span>3.48</span></div>
<div class="c" style="left:837px;top:461px;width:64px;height:25px;"><span>3.15</span></div>
<div class="c" style="left:902px;top:461px;width:36px;height:25px;"><span><span class="r k">胜</span></span></div>
<div class="c" style="left:939px;top:461px;width:36px;height:25px;"><span><span class="r k">赢</span></span></div>
<div class="c" style="left:976px;top:461px;width:54px;height:25px;"><span><span class="r k">大</span></span></div>
<div class="c" style="left:4px;top:487px;width:80px;height:25px;"><span><span style="color:#fff"><span class="k">芬超</span></span></span></div>
<div class="c" style="left:85px;top:487px;width:75px;height:25px;"><span>24-05-18</span></div>
<div class="c" style="left:161px;top:487px;width:106px;height:25px;"><span><span class="tm"><span class="k">埃尔维斯</span></span></span></div>
<div class="c" style="left:268px;top:487px;width:87px;height:25px;"><span><span class="r">5-0</span>(2-0)</span></div>
<div class="c" style="left:356px;top:487px;width:37px;height:25px;"><span>7-3</span></div>
<div class="c" style="left:394px;top:487px;width:97px;height:25px;"><span><span class="g"><span class="k">哈卡</span></span></span></div>
<div class="c" style="left:492px;top:487px;width:50px;height:25px;"><span>0.85</span></div>
<div class="c" style="left:543px;top:487px;width:95px;height:25px;"><span><span class="k">平</span>/<span class="k">半</span></span></div>
<div class="c" style="left:639px;top:487px;width:50px;height:25px;"><span>1.03</span></div>
<div class="c" style="left:690px;top:487px;width:81px;height:25px;"><span>2.02</span></div>
<div class="c" style="left:772px;top:487px;width:64px;height:25px;"><span>3.54</span></div>
<div class="c" style="left:837px;top:487px;width:64px;height:25px;"><span>3.27</span></div>
<div class="c" style="left:902px;top:487px;width:36px;height:25px;"><span><span class="b k">负</span></span></div>
<div class="c" style="left:939px;top:487px;width:36px;height:25px;"><span><span class="b k">输</span></span></div>
<div class="c" style="left:976px;top:487px;width:54px;height:25px;"><span><span class="r k">大</span></span></div>
<div class="c" style="left:4px;top:513px;width:80px;height:25px;"><span><span style="color:#fff"><span class="k">芬超</span></span></span></div>
<div class="c" style="left:85px;top:513px;width:75px;height:25px;"><span>24-05-11</span></div>
<div class="c" style="left:161px;top:513px;width:106px;height:25px;"><span><span class="g"><span class="k">哈卡</span></span></span></div>
<div class="c" style="left:268px;top:513px;width:87px;height:25px;"><span><span class="r">2-0</span>(1-0)</span></div>
<div class="c" style="left:356px;top:513px;width:37px;height:25px;"><span>1-6</span></div>
<div class="c" style="left:394px;top:513px;width:97px;height:25px;"><span><span class="tm"><span class="k">塞那乔其</span></span></span></div>
<div class="c" style="left:492px;top:513px;width:50px;height:25px;"><span>1.09</span></div>
<div class="c" style="left:543px;top:513px;width:95px;height:25px;"><span><span class="k">平手</span></span></div>
<div class="c" style="left:639px;top:513px;width:50px;height:25px;"><span>0.79</span></div>
<div class="c" style="left:690px;top:513px;width:81px;height:25px;"><span>2.68</span></div>
<div class="c" style="left:772px;top:513px;width:64px;height:25px;"><span>3.38</span></div>
<div class="c" style="left:837px;top:513px;width:64px;height:25px;"><span>2.41</span></div>
<div class="c" style="left:902px;top:513px;width:36px;height:25px;"><span><span class="r k">胜</span></span></div>
<div class="c" style="left:939px;top:513px;width:36px;height:25px;"><span><span class="r k">赢</span></span></div>
<div class="c" style="left:976px;top:513px;width:54px;height:25px;"><span><span class="b k">小</span></span></div>
<div class="c" style="left:4px;top:539px;width:80px;height:25px;"><span><span style="color:#fff"><span class="k">芬兰杯</span></span></span></div>
<div class="c" style="left:85px;top:539px;width:75px;height:25px;"><span>24-05-08</span></div>
<div class="c" style="left:161px;top:539px;width:106px;height:25px;"><span><span class="tm"><span class="k">拉迪恩雷帕斯</span></span></span></div>
<div class="c" style="left:268px;top:539px;width:87px;height:25px;"><span><span class="r">1-5</span>(0-2)</span></div>
<div class="c" style="left:356px;top:539px;width:37px;height:25px;"><span>6-5</span></div>
<div class="c" style="left:394px;top:539px;width:97px;height:25px;"><span><span class="g"><span class="k">哈卡</span></span></span></div>
<div class="c" style="left:492px;top:539px;width:50px;height:25px;"><span>0.80</span></div>
<div class="c" style="left:543px;top:539px;width:95px;height:25px;"><span><span class="k">受两球半</span></span></div>
<div class="c" style="left:639px;top:539px;width:50px;height:25px;"><span>1.02</span></div>
<div class="c" style="left:690px;top:539px;width:81px;height:25px;"><span>14.21</span></div>
<div class="c" style="left:772px;top:539px;width:64px;height:25px;"><span>9.89</span></div>
<div class="c" style="left:837px;top:539px;width:64px;height:25px;"><span>1.09</span></div>
<div class="c" style="left:902px;top:539px;width:36px;height:25px;"><span><span class="r k">胜</span></span></div>
<div class="c" style="left:939px;top:539px;width:36px;height:25px;"><span><span class="r k">赢</span></span></div>
<div class="c" style="left:976px;top:539px;width:54px;height:25px;"><span><span class="r k">大</span></span></div>
<div class="c" style="left:4px;top:565px;width:80px;height:25px;"><span><span style="color:#fff"><span class="k">芬超</span></span></span></div>
<div class="c" style="left:85px;top:565px;width:75px;height:25px;"><span>24-05-05</span></div>
<div class="c" style="left:161px;top:565px;width:106px;height:25px;"><span><span class="tm"><span class="k">格尼斯坦</span></span></span></div>
<div class="c" style="left:268px;top:565px;width:87px;height:25px;"><span><span class="r">0-3</span>(0-2)</span></div>
<div class="c" style="left:356px;top:565px;width:37px;height:25px;"><span>7-3</span></div>
<div class="c" style="left:394px;top:565px;width:97px;height:25px;"><span><span class="g"><span class="k">哈卡</span></span></span></div>
<div class="c" style="left:492px;top:565px;width:50px;height:25px;"><span>0.90</span></div>
<div class="c" style="left:543px;top:565px;width:95px;height:25px;"><span><span class="k">平手</span></span></div>
<div class="c" style="left:639px;top:565px;width:50px;height:25px;"><span>0.98</span></div>
<div class="c" style="left:690px;top:565px;width:81px;height:25px;"><span>2.49</span></div>
<div class="c" style="left:772px;top:565px;width:64px;height:25px;"><span>3.34</span></div>
<div class="c" style="left:837px;top:565px;width:64px;height:25px;"><span>2.63</span></div>
<div class="c" style="left:902px;top:565px;width:36px;height:25px;"><span><span class="r k">胜</span></span></div>
<div class="c" style="left:939px;top:565px;width:36px;height:25px;"><span><span class="r k">赢</span></span></div>
<div class="c" style="left:976px;top:565px;width:54px;height:25px;"><span><span class="r k">大</span></span></div>
<div class="c" style="left:4px;top:591px;width:80px;height:25px;"><span><span style="color:#fff"><span class="k">芬超</span></span></span></div>
<div class="c" style="left:85px;top:591px;width:75px;height:25px;"><span>24-04-27</span></div>
<div class="c" style="left:161px;top:591px;width:106px;height:25px;"><span><span class="g"><span class="k">哈卡</span></span></span></div>
<div class="c" style="left:268px;top:591px;width:87px;height:25px;"><span><span class="r">1-1</span>(1-0)</span></div>
<div class="c" style="left:356px;top:591px;width:37px;height:25px;"><span>7-4</span></div>
<div class="c" style="left:394px;top:591px;width:97px;height:25px;"><span><span class="tm"><span class="k">赫尔辛基</span></span></span></div>
<div class="c" style="left:492px;top:591px;width:50px;height:25px;"><span>0.83</span></div>
<div class="c" style="left:543px;top:591px;width:95px;height:25px;"><span><span class="k">受半球</span></span></div>
<div class="c" style="left:639px;top:591px;width:50px;height:25px;"><span>1.05</span></div>
<div class="c" style="left:690px;top:591px;width:81px;height:25px;"><span>4.03</span></div>
<div class="c" style="left:772px;top:591px;width:64px;height:25px;"><span>3.58</span></div>
<div class="c" style="left:837px;top:591px;width:64px;height:25px;"><span>1.80</span></div>
<div class="c" style="left:902px;top:591px;width:36px;height:25px;"><span><span class="g k">平</span></span></div>
<div class="c" style="left:939px;top:591px;width:36px;height:25px;"><span><span class="r k">赢</span></span></div>
<div class="c" style="left:976px;top:591px;width:54px;height:25px;"><span><span class="b k">小</span></span></div>
<div class="c" style="left:4px;top:617px;width:80px;height:25px;"><span><span style="color:#fff"><span class="k">芬超</span></span></span></div>
<div class="c" style="left:85px;top:617px;width:75px;height:25px;"><span>24-04-20</span></div>
<div class="c" style="left:161px;top:617px;width:106px;height:25px;"><span><span class="tm"><span class="k">拉赫蒂</span></span></span></div>
<div class="c" style="left:268px;top:617px;width:87px;height:25px;"><span><span class="r">1-1</span>(0-1)</span></div>
<div class="c" style="left:356px;top:617px;width:37px;height:25px;"><span>14-2</span></div>
<div class="c" style="left:394px;top:617px;width:97px;height:25px;"><span><span class="g"><span class="k">哈卡</span></span></span></div>
<div class="c" style="left:492px;top:617px;width:50px;height:25px;"><span>1.14</span></div>
<div class="c" style="left:543px;top:617px;width:95px;height:25px;"><span><span class="k">平手</span></span></div>
<div class="c" style="left:639px;top:617px;width:50px;height:25px;"><span>0.77</span></div>
<div class="c" style="left:690px;top:617px;width:81px;height:25px;"><span>2.86</span></div>
<div class="c" style="left:772px;top:617px;width:64px;height:25px;"><span>3.22</span></div>
<div class="c" style="left:837px;top:617px;width:64px;height:25px;"><span>2.37</span></div>
<div class="c" style="left:902px;top:617px;width:36px;height:25px;"><span><span class="g k">平</span></span></div>
<div class="c" style="left:939px;top:617px;width:36px;height:25px;"><span><span class="g k">走</span></span></div>
<div class="c" style="left:976px;top:617px;width:54px;height:25px;"><span><span class="b k">小</span></span></div>
<div class="c" style="left:4px;top:643px;width:80px;height:25px;"><span><span style="color:#fff"><span class="k">芬兰杯</span></span></span></div>
<div class="c" style="left:85px;top:643px;width:75px;height:25px;"><span>24-04-16</span></div>
<div class="c" style="left:161px;top:643px;width:106px;height:25px;"><span><span class="tm"><span class="k">吉普</span></span></span></div>
<div class="c" style="left:268px;top:643px;width:87px;height:25px;"><span><span class="r">0-2</span>(0-2)</span></div>
<div class="c" style="left:356px;top:643px;width:37px;height:25px;"><span>6-2</span></div>
<div class="c" style="left:394px;top:643px;width:97px;height:25px;"><span><span class="g"><span class="k">哈卡</span></span></span></div>
<div class="c" style="left:492px;top:643px;width:50px;height:25px;"><span>0.84</span></div>
<div class="c" style="left:543px;top:643px;width:95px;height:25px;"><span><span class="k">受一球</span></span></div>
<div class="c" style="left:639px;top:643px;width:50px;height:25px;"><span>0.86</span></div>
<div class="c" style="left:690px;top:643px;width:81px;height:25px;"><span>6.26</span></div>
<div class="c" style="left:772px;top:643px;width:64px;height:25px;"><span>4.08</span></div>
<div class="c" style="left:837px;top:643px;width:64px;height:25px;"><span>1.48</span></div>
<div class="c" style="left:902px;top:643px;width:36px;height:25px;"><span><span class="r k">胜</span></span></div>
<div class="c" style="left:939px;top:643px;width:36px;height:25px;"><span><span class="r k">赢</span></span></div>
<div class="c" style="left:976px;top:643px;width:54px;height:25px;"><span><span class="b k">小</span></span></div>
<div class="c" style="left:4px;top:669px;width:80px;height:25px;"><span><span style="color:#fff"><span class="k">芬超</span></span></span></div>
<div class="c" style="left:85px;top:669px;width:75px;height:25px;"><span>24-04-12</span></div>
<div class="c" style="left:161px;top:669px;width:106px;height:25px;"><span><span class="g"><span class="k">哈卡</span></span></span></div>
<div class="c" style="left:268px;top:669px;width:87px;height:25px;"><span><span class="r">2-1</span>(1-0)</span></div>
<div class="c" style="left:356px;top:669px;width:37px;height:25px;"><span>1-4</span></div>
<div class="c" style="left:394px;top:669px;width:97px;height:25px;"><span><span class="tm">EIF<span class="k">埃克纳斯</span></span></span></div>
<div class="c" style="left:492px;top:669px;width:50px;height:25px;"><span>0.90</span></div>
<div class="c" style="left:543px;top:669px;width:95px;height:25px;"><span><span class="k">半</span>/<span class="k">一</span></span></div>
<div class="c" style="left:639px;top:669px;width:50px;height:25px;"><span>0.99</span></div>
<div class="c" style="left:690px;top:669px;width:81px;height:25px;"><span>1.64</span></div>
<div class="c" style="left:772px;top:669px;width:64px;height:25px;"><span>3.80</span></div>
<div class="c" style="left:837px;top:669px;width:64px;height:25px;"><span>4.73</span></div>
<div class="c" style="left:902px;top:669px;width:36px;height:25px;"><span><span class="r k">胜</span></span></div>
<div class="c" style="left:939px;top:669px;width:36px;height:25px;"><span><span class="r k">赢</span></span></div>
<div class="c" style="left:976px;top:669px;width:54px;height:25px;"><span><span class="r k">大</span></span></div>
<div class="c" style="left:4px;top:695px;width:80px;height:25px;"><span><span style="color:#fff"><span class="k">芬超</span></span></span></div>
<div class="c" style="left:85px;top:695px;width:75px;height:25px;"><span>24-04-06</span></div>
<div class="c" style="left:161px;top:695px;width:106px;height:25px;"><span><span class="badge">1</span><span class="g"><span class="k">哈卡</span></span></span></div>
<div class="c" style="left:268px;top:695px;width:87px;height:25px;"><span><span class="r">1-2</span>(0-2)</span></div>
<div class="c" style="left:356px;top:695px;width:37px;height:25px;"><span>6-4</span></div>
<div class="c" style="left:394px;top:695px;width:97px;height:25px;"><span><span class="tm">VPS<span class="k">瓦萨</span></span></span></div>
<div class="c" style="left:492px;top:695px;width:50px;height:25px;"><span>0.89</span></div>
<div class="c" style="left:543px;top:695px;width:95px;height:25px;"><span><span class="k">平</span>/<span class="k">半</span></span></div>
<div class="c" style="left:639px;top:695px;width:50px;height:25px;"><span>1.00</span></div>
<div class="c" style="left:690px;top:695px;width:81px;height:25px;"><span>2.23</span></div>
<div class="c" style="left:772px;top:695px;width:64px;height:25px;"><span>3.16</span></div>
<div class="c" style="left:837px;top:695px;width:64px;height:25px;"><span>3.14</span></div>
<div class="c" style="left:902px;top:695px;width:36px;height:25px;"><span><span class="b k">负</span></span></div>
<div class="c" style="left:939px;top:695px;width:36px;height:25px;"><span><span class="b k">输</span></span></div>
<div class="c" style="left:976px;top:695px;width:54px;height:25px;"><span><span class="r k">大</span></span></div>
<div class="c" style="left:4px;top:720px;width:1026px;height:25px;letter-spacing:0.22px"><span><span class="k">近</span><span class="r">10</span><span class="k">场</span>,<span class="k">胜</span>6<span class="k">平</span>2<span class="k">负</span>2, <span class="k">胜率</span>:<span class="r">60%</span>&nbsp;<span class="k">让胜率</span>:<span class="r">70%</span>&nbsp;<span class="k">大率</span>:<span class="r">60%</span>&nbsp;<span class="k">单率</span>:<span class="r">50%</span></span></div>
<div class="sel" style="left:524px;top:419px;width:68px;height:22px"><span>Crow*</span><svg width="9" height="6" viewBox="0 0 9 6"><path d="M0.8 1l3.7 3.6 3.7-3.6" fill="none" stroke="#000" stroke-width="1.5"/></svg></div>
<div class="sel" style="left:600px;top:419px;width:57px;height:22px"><span><span class="k">终指</span></span><svg width="9" height="6" viewBox="0 0 9 6"><path d="M0.8 1l3.7 3.6 3.7-3.6" fill="none" stroke="#000" stroke-width="1.5"/></svg></div>
<div class="sel" style="left:724px;top:419px;width:78px;height:22px"><span><span class="k">平均值</span></span><svg width="9" height="6" viewBox="0 0 9 6"><path d="M0.8 1l3.7 3.6 3.7-3.6" fill="none" stroke="#000" stroke-width="1.5"/></svg></div>
<div class="sel" style="left:810px;top:419px;width:57px;height:22px"><span><span class="k">终指</span></span><svg width="9" height="6" viewBox="0 0 9 6"><path d="M0.8 1l3.7 3.6 3.7-3.6" fill="none" stroke="#000" stroke-width="1.5"/></svg></div>
<div class="sel" style="left:938px;top:419px;width:57px;height:22px"><span><span class="k">全场</span></span><svg width="9" height="6" viewBox="0 0 9 6"><path d="M0.8 1l3.7 3.6 3.7-3.6" fill="none" stroke="#000" stroke-width="1.5"/></svg></div></body></html>
